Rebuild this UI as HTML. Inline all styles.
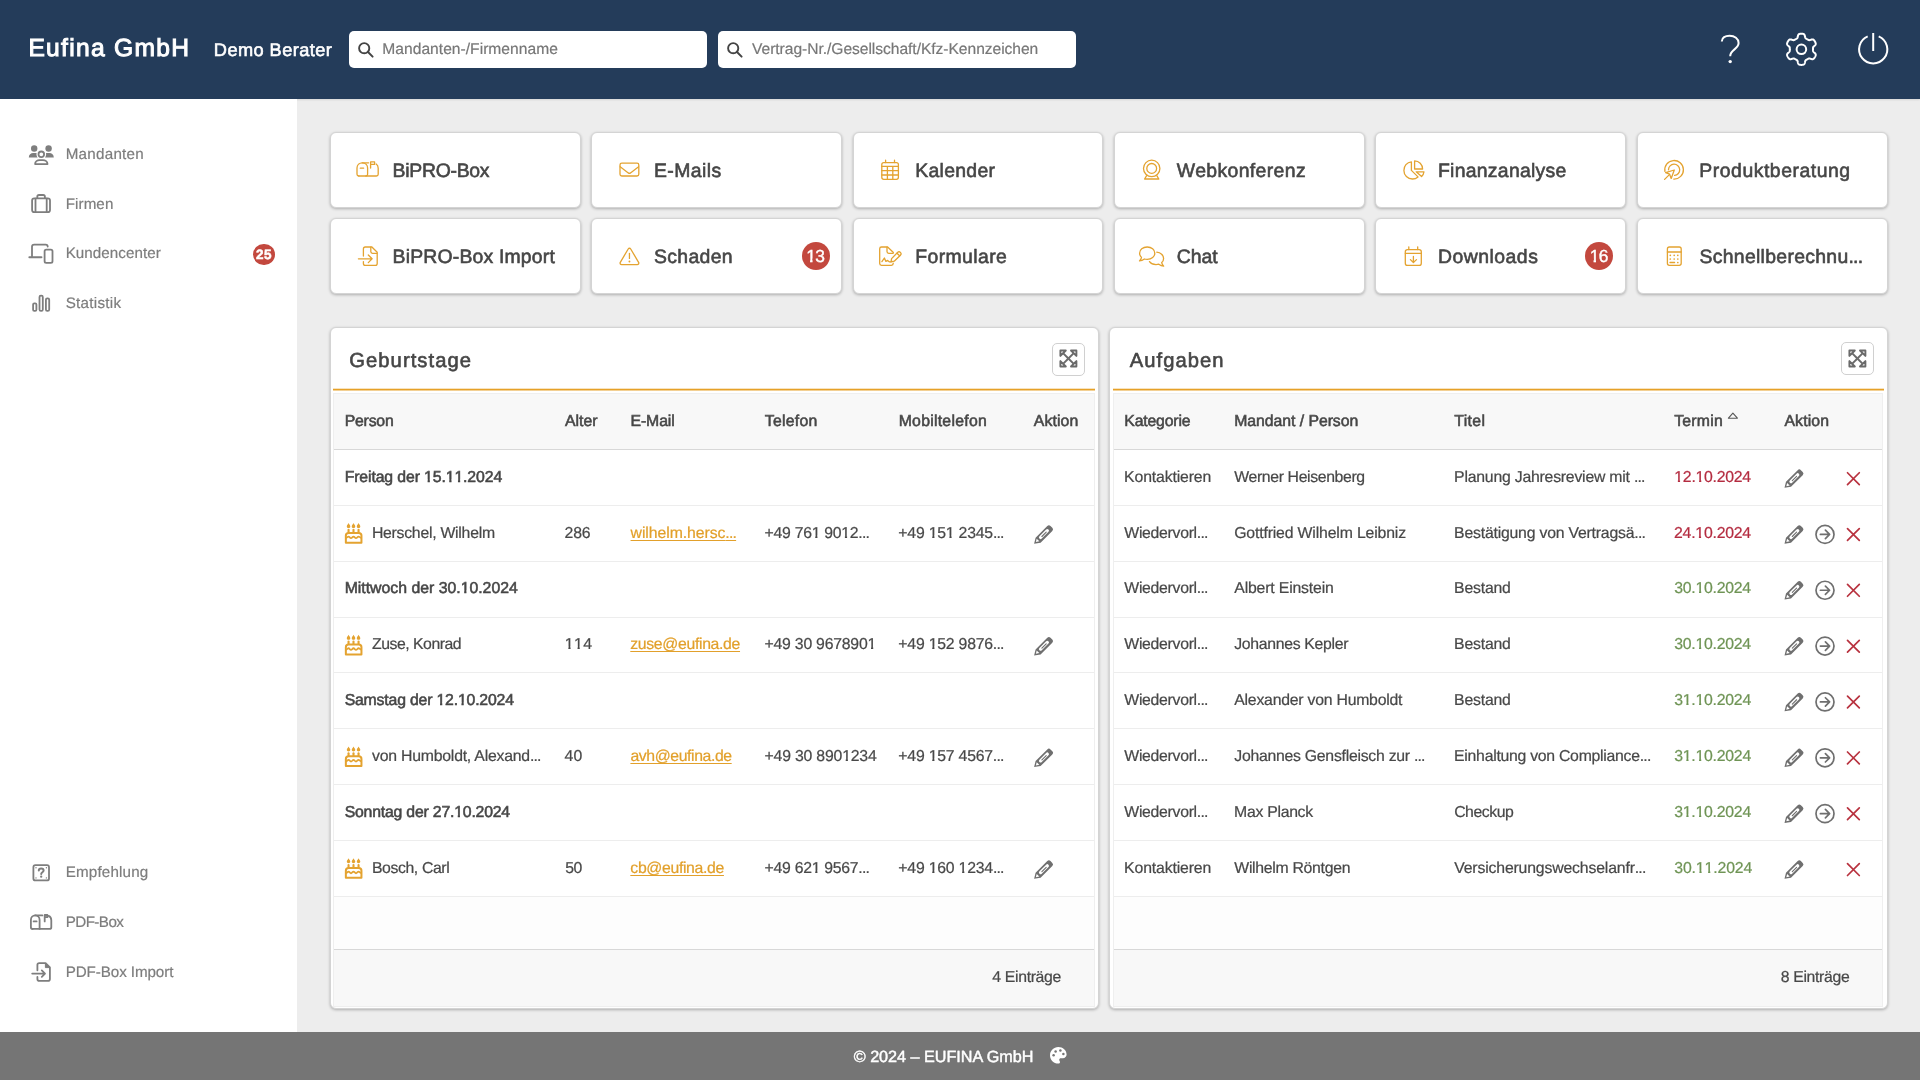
<!DOCTYPE html>
<html lang="de">
<head>
<meta charset="utf-8">
<title>Eufina GmbH</title>
<style>
*{box-sizing:border-box;margin:0;padding:0}
html,body{width:1920px;height:1080px;overflow:hidden}
body{font-family:"Liberation Sans",sans-serif;text-rendering:geometricPrecision;background:#ededed;color:#444;position:relative;font-size:15px}
svg{display:block;overflow:visible}
.abs{position:absolute}
.t{position:absolute;white-space:nowrap;line-height:1}
#txt{position:absolute;left:0;top:0;width:1920px;height:1080px;will-change:transform}
.med{-webkit-text-stroke:0.55px currentColor}
.med5{-webkit-text-stroke:0.45px currentColor}
.med2{-webkit-text-stroke:0.6px currentColor}
.med4{-webkit-text-stroke:1.0px currentColor}
.med3{-webkit-text-stroke:0.6px currentColor;color:#464646}
#hdr{position:absolute;left:0;top:0;width:1920px;height:99px;background:#243c5a;box-shadow:0 1px 2px rgba(0,0,0,.10)}
.brand{color:#fff}
.search{position:absolute;top:31px;height:37px;width:358px;background:#fff;border-radius:5px}
.ph{color:#777;-webkit-text-stroke:0.2px currentColor}
#side{position:absolute;left:0;top:99px;width:297px;height:933px;background:#fff}
.nav{color:#7d7d7d;-webkit-text-stroke:0.2px currentColor}
#ftr{position:absolute;left:0;top:1032px;width:1920px;height:48px;background:#757575}
.tile{position:absolute;width:250.8px;height:75.7px;background:#fff;border:1px solid #d4d4d4;border-radius:6px;box-shadow:0 1px 3px rgba(0,0,0,.27)}
.badge{position:absolute;background:#c3483e;border-radius:50%}
.panel{position:absolute;top:327px;height:682px;background:#fff;border:1px solid #d4d4d4;border-radius:6px;box-shadow:0 1px 3px rgba(0,0,0,.27)}
.oline{position:absolute;height:3px;background:linear-gradient(to bottom,rgba(230,161,40,.30) 0,rgba(230,161,40,.30) 1px,rgba(230,161,40,1) 1px,rgba(230,161,40,1) 2px,rgba(230,161,40,.5) 2px,rgba(230,161,40,.5) 3px)}
.xbtn{position:absolute;width:32.6px;height:32.6px;border:1px solid #d0d0d0;border-radius:5px;background:#fff}
.tbl{position:absolute;border:1px solid #efefef;background:#fdfdfd}
.row{position:absolute;background:#fff;border-bottom:1px solid #ededed}
.hrow{position:absolute;background:#f8f8f8;border-bottom:1px solid #d8d8d8}
.frow{position:absolute;background:#f8f8f8;border-top:1px solid #d8d8d8}
.c{color:#484848;-webkit-text-stroke:0.22px currentColor}
.h{color:#464646}
.red{color:#b42c40}
.grn{color:#6f9455}
.lnk{color:#e2a02b;text-decoration:underline;text-underline-offset:2px}

.o{display:inline-block;font-style:normal;clip-path:polygon(0 0,100% 0,100% .6em,.365em .6em,.365em 1.3em,.225em 1.3em,.225em .6em,0 .6em)}

</style>
</head>
<body>
<div id="hdr">
<div class="search" style="left:349px"><svg class="abs" style="left:9.3px;top:11.3px" width="15.5" height="15.5" viewBox="0 0 15.5 15.5" ><circle cx="6.2" cy="6.2" r="5.1" fill="none" stroke="#444" stroke-width="1.9"/><path d="M10 10 L14.6 14.6" stroke="#444" stroke-width="2" stroke-linecap="round"/></svg></div>
<div class="search" style="left:717.5px"><svg class="abs" style="left:9.3px;top:11.3px" width="15.5" height="15.5" viewBox="0 0 15.5 15.5" ><circle cx="6.2" cy="6.2" r="5.1" fill="none" stroke="#444" stroke-width="1.9"/><path d="M10 10 L14.6 14.6" stroke="#444" stroke-width="2" stroke-linecap="round"/></svg></div>
<svg class="abs" style="left:1718px;top:32px" width="24" height="34" viewBox="0 0 24 34" ><path d="M3.8 9.6 C3.8 5.6 7.2 3.8 11.6 3.8 C16.6 3.8 20.6 6.6 20.6 11 C20.6 17.2 12.2 17.6 12.2 24.2" fill="none" stroke="#fff" stroke-width="2" stroke-linecap="butt"/><circle cx="12.2" cy="29.6" r="1.7" fill="#fff"/></svg>
<svg class="abs" style="left:1784px;top:31px" width="36" height="37" viewBox="0 0 36 37" ><path d="M29.00 18.30 L29.00 18.10 L29.00 17.89 L29.00 17.69 L28.99 17.49 L28.99 17.29 L29.00 17.08 L29.01 16.87 L29.04 16.66 L29.09 16.45 L29.18 16.22 L29.31 15.98 L29.52 15.72 L29.80 15.44 L30.15 15.12 L30.54 14.78 L30.92 14.42 L31.24 14.07 L31.49 13.72 L31.64 13.40 L31.72 13.09 L31.74 12.79 L31.72 12.51 L31.67 12.24 L31.59 11.98 L31.50 11.72 L31.40 11.47 L31.29 11.22 L31.17 10.98 L31.04 10.74 L30.91 10.50 L30.77 10.27 L30.63 10.04 L30.47 9.81 L30.31 9.59 L30.15 9.37 L29.97 9.17 L29.78 8.97 L29.57 8.79 L29.34 8.63 L29.08 8.50 L28.77 8.42 L28.41 8.39 L27.99 8.43 L27.52 8.53 L27.02 8.68 L26.53 8.85 L26.08 9.00 L25.69 9.09 L25.36 9.14 L25.09 9.14 L24.85 9.10 L24.64 9.04 L24.44 8.96 L24.26 8.86 L24.08 8.77 L23.90 8.66 L23.72 8.56 L23.55 8.46 L23.38 8.36 L23.20 8.25 L23.02 8.15 L22.85 8.05 L22.67 7.95 L22.50 7.85 L22.32 7.75 L22.14 7.64 L21.97 7.53 L21.80 7.40 L21.64 7.25 L21.49 7.06 L21.35 6.82 L21.23 6.52 L21.12 6.13 L21.02 5.67 L20.92 5.16 L20.80 4.65 L20.66 4.19 L20.48 3.81 L20.27 3.51 L20.05 3.29 L19.80 3.13 L19.55 3.01 L19.29 2.92 L19.02 2.85 L18.76 2.80 L18.49 2.76 L18.22 2.73 L17.94 2.71 L17.67 2.70 L17.40 2.70 L17.13 2.70 L16.86 2.71 L16.58 2.73 L16.31 2.76 L16.04 2.80 L15.78 2.85 L15.51 2.92 L15.25 3.01 L15.00 3.13 L14.75 3.29 L14.53 3.51 L14.32 3.81 L14.14 4.19 L14.00 4.65 L13.88 5.16 L13.78 5.67 L13.68 6.13 L13.57 6.52 L13.45 6.82 L13.31 7.06 L13.16 7.25 L13.00 7.40 L12.83 7.53 L12.66 7.64 L12.48 7.75 L12.30 7.85 L12.13 7.95 L11.95 8.05 L11.78 8.15 L11.60 8.25 L11.42 8.36 L11.25 8.46 L11.08 8.56 L10.90 8.66 L10.72 8.77 L10.54 8.86 L10.36 8.96 L10.16 9.04 L9.95 9.10 L9.71 9.14 L9.44 9.14 L9.11 9.09 L8.72 9.00 L8.27 8.85 L7.78 8.68 L7.28 8.53 L6.81 8.43 L6.39 8.39 L6.03 8.42 L5.72 8.50 L5.46 8.63 L5.23 8.79 L5.02 8.97 L4.83 9.17 L4.65 9.37 L4.49 9.59 L4.33 9.81 L4.17 10.04 L4.03 10.27 L3.89 10.50 L3.76 10.74 L3.63 10.98 L3.51 11.22 L3.40 11.47 L3.30 11.72 L3.21 11.98 L3.13 12.24 L3.08 12.51 L3.06 12.79 L3.08 13.09 L3.16 13.40 L3.31 13.72 L3.56 14.07 L3.88 14.42 L4.26 14.78 L4.65 15.12 L5.00 15.44 L5.28 15.72 L5.49 15.98 L5.62 16.22 L5.71 16.45 L5.76 16.66 L5.79 16.87 L5.80 17.08 L5.81 17.29 L5.81 17.49 L5.80 17.69 L5.80 17.89 L5.80 18.10 L5.80 18.30 L5.80 18.50 L5.80 18.71 L5.80 18.91 L5.81 19.11 L5.81 19.31 L5.80 19.52 L5.79 19.73 L5.76 19.94 L5.71 20.15 L5.62 20.38 L5.49 20.62 L5.28 20.88 L5.00 21.16 L4.65 21.48 L4.26 21.82 L3.88 22.18 L3.56 22.53 L3.31 22.88 L3.16 23.20 L3.08 23.51 L3.06 23.81 L3.08 24.09 L3.13 24.36 L3.21 24.62 L3.30 24.88 L3.40 25.13 L3.51 25.38 L3.63 25.62 L3.76 25.86 L3.89 26.10 L4.03 26.33 L4.17 26.56 L4.33 26.79 L4.49 27.01 L4.65 27.23 L4.83 27.43 L5.02 27.63 L5.23 27.81 L5.46 27.97 L5.72 28.10 L6.03 28.18 L6.39 28.21 L6.81 28.17 L7.28 28.07 L7.78 27.92 L8.27 27.75 L8.72 27.60 L9.11 27.51 L9.44 27.46 L9.71 27.46 L9.95 27.50 L10.16 27.56 L10.36 27.64 L10.54 27.74 L10.72 27.83 L10.90 27.94 L11.08 28.04 L11.25 28.14 L11.42 28.24 L11.60 28.35 L11.78 28.45 L11.95 28.55 L12.13 28.65 L12.30 28.75 L12.48 28.85 L12.66 28.96 L12.83 29.07 L13.00 29.20 L13.16 29.35 L13.31 29.54 L13.45 29.78 L13.57 30.08 L13.68 30.47 L13.78 30.93 L13.88 31.44 L14.00 31.95 L14.14 32.41 L14.32 32.79 L14.53 33.09 L14.75 33.31 L15.00 33.47 L15.25 33.59 L15.51 33.68 L15.78 33.75 L16.04 33.80 L16.31 33.84 L16.58 33.87 L16.86 33.89 L17.13 33.90 L17.40 33.90 L17.67 33.90 L17.94 33.89 L18.22 33.87 L18.49 33.84 L18.76 33.80 L19.02 33.75 L19.29 33.68 L19.55 33.59 L19.80 33.47 L20.05 33.31 L20.27 33.09 L20.48 32.79 L20.66 32.41 L20.80 31.95 L20.92 31.44 L21.02 30.93 L21.12 30.47 L21.23 30.08 L21.35 29.78 L21.49 29.54 L21.64 29.35 L21.80 29.20 L21.97 29.07 L22.14 28.96 L22.32 28.85 L22.50 28.75 L22.67 28.65 L22.85 28.55 L23.02 28.45 L23.20 28.35 L23.38 28.24 L23.55 28.14 L23.72 28.04 L23.90 27.94 L24.08 27.83 L24.26 27.74 L24.44 27.64 L24.64 27.56 L24.85 27.50 L25.09 27.46 L25.36 27.46 L25.69 27.51 L26.08 27.60 L26.53 27.75 L27.02 27.92 L27.52 28.07 L27.99 28.17 L28.41 28.21 L28.77 28.18 L29.08 28.10 L29.34 27.97 L29.57 27.81 L29.78 27.63 L29.97 27.43 L30.15 27.23 L30.31 27.01 L30.47 26.79 L30.63 26.56 L30.77 26.33 L30.91 26.10 L31.04 25.86 L31.17 25.62 L31.29 25.38 L31.40 25.13 L31.50 24.88 L31.59 24.62 L31.67 24.36 L31.72 24.09 L31.74 23.81 L31.72 23.51 L31.64 23.20 L31.49 22.88 L31.24 22.53 L30.92 22.18 L30.54 21.82 L30.15 21.48 L29.80 21.16 L29.52 20.88 L29.31 20.62 L29.18 20.38 L29.09 20.15 L29.04 19.94 L29.01 19.73 L29.00 19.52 L28.99 19.31 L28.99 19.11 L29.00 18.91 L29.00 18.71 L29.00 18.50 L29.00 18.30Z" fill="none" stroke="#fff" stroke-width="2" stroke-linejoin="round"/><circle cx="17.4" cy="18.3" r="4.8" fill="none" stroke="#fff" stroke-width="2"/></svg>
<svg class="abs" style="left:1856px;top:31px" width="36" height="36" viewBox="0 0 36 36" ><path d="M11.69 5.32 A14.1 14.1 0 1 0 22.71 5.32" fill="none" stroke="#fff" stroke-width="2"/><path d="M17.2 2 V20" stroke="#fff" stroke-width="2"/></svg>
</div>
<div id="side"></div>
<svg class="abs" style="left:0;top:0" width="1920" height="1080" viewBox="0 0 1920 1080"><circle cx="34.2" cy="148.5" r="3.2" fill="#7e7e7e"/><circle cx="48.6" cy="148.5" r="3.2" fill="#7e7e7e"/><circle cx="41.3" cy="154.3" r="2.8" fill="none" stroke="#7e7e7e" stroke-width="1.8"/><path d="M28.8 157.6 C28.8 154.6 30.8 153.0 33.2 153.0 L36.6 153.0 C36.2 154.6 36.6 156.2 37.6 157.6 Z" fill="#7e7e7e"/><path d="M53.8 157.6 C53.8 154.6 51.8 153.0 49.4 153.0 L46.0 153.0 C46.4 154.6 46.0 156.2 45.0 157.6 Z" fill="#7e7e7e"/><path d="M35.1 164.1 C35.1 161.6 37.4 160.1 39.6 160.1 L43.0 160.1 C45.2 160.1 47.5 161.6 47.5 164.1 Z" fill="none" stroke="#7e7e7e" stroke-width="1.8" stroke-linejoin="round" stroke-linecap="round"/><rect x="32.1" y="198.3" width="17.9" height="13.8" rx="2.2" fill="none" stroke="#7e7e7e" stroke-width="1.8" stroke-linejoin="round" stroke-linecap="round"/><path d="M37.3 198.0 V196.6 C37.3 195.6 38.0 195.0 39.0 195.0 H43.2 C44.2 195.0 44.9 195.6 44.9 196.6 V198.0" fill="none" stroke="#7e7e7e" stroke-width="1.8" stroke-linejoin="round" stroke-linecap="round"/><path d="M35.5 198.6 V212 M46.7 198.6 V212" fill="none" stroke="#7e7e7e" stroke-width="1.8" stroke-linejoin="round" stroke-linecap="round"/><path d="M32.0 256.4 V246.8 C32.0 245.4 32.9 244.6 34.2 244.6 H45.6 C46.9 244.6 47.7 245.4 47.7 246.6" fill="none" stroke="#7e7e7e" stroke-width="1.8" stroke-linejoin="round" stroke-linecap="round"/><path d="M29.4 257.3 H41.4" fill="none" stroke="#7e7e7e" stroke-width="2.1" stroke-linecap="round"/><rect x="44.6" y="249.6" width="7.9" height="13.3" rx="1.6" fill="none" stroke="#7e7e7e" stroke-width="1.8" stroke-linejoin="round" stroke-linecap="round"/><rect x="33.1" y="303.3" width="3.3" height="7.6" rx="1.2" fill="none" stroke="#7e7e7e" stroke-width="1.8" stroke-linejoin="round" stroke-linecap="round"/><rect x="39.5" y="295.6" width="3.3" height="15.3" rx="1.4" fill="none" stroke="#7e7e7e" stroke-width="1.8" stroke-linejoin="round" stroke-linecap="round"/><rect x="45.9" y="298.4" width="3.3" height="12.5" rx="1.4" fill="none" stroke="#7e7e7e" stroke-width="1.8" stroke-linejoin="round" stroke-linecap="round"/><rect x="33.4" y="865.2" width="15.6" height="15.2" rx="2" fill="none" stroke="#7e7e7e" stroke-width="1.8" stroke-linejoin="round" stroke-linecap="round"/><path d="M38.8 870.6 C38.8 869.2 39.8 868.6 41.2 868.6 C42.6 868.6 43.6 869.3 43.6 870.5 C43.6 872.2 41.2 872.2 41.2 874.0" fill="none" stroke="#7e7e7e" stroke-width="2.0" stroke-linecap="round"/><circle cx="41.2" cy="876.7" r="1.15" fill="#7e7e7e"/><circle cx="36.0" cy="867.8" r="0.7" fill="#7e7e7e"/><circle cx="46.4" cy="867.8" r="0.7" fill="#7e7e7e"/><circle cx="36.0" cy="877.9" r="0.7" fill="#7e7e7e"/><circle cx="46.4" cy="877.9" r="0.7" fill="#7e7e7e"/><path d="M32.6 928.9 C31.6 928.9 30.9 928.2 30.9 927.2 V920.0 C30.9 917.2 32.9 915.4 35.2 915.4 C37.6 915.4 39.6 917.2 39.6 920.0 V928.9" fill="none" stroke="#7e7e7e" stroke-width="1.8" stroke-linejoin="round" stroke-linecap="round"/><path d="M32.6 928.9 H49.6 C50.6 928.9 51.3 928.2 51.3 927.2 V920.2 C51.3 918.2 50.2 916.6 48.6 915.9" fill="none" stroke="#7e7e7e" stroke-width="1.8" stroke-linejoin="round" stroke-linecap="round"/><path d="M35.2 915.4 H42.4" fill="none" stroke="#7e7e7e" stroke-width="1.8" stroke-linejoin="round" stroke-linecap="round"/><path d="M33.6 921.4 H36.6" fill="none" stroke="#7e7e7e" stroke-width="1.8" stroke-linejoin="round" stroke-linecap="round"/><path d="M44.7 921.4 V915.0 H47.4 V917.2 H44.9" fill="none" stroke="#7e7e7e" stroke-width="1.8" stroke-linejoin="round" stroke-linecap="round"/><path d="M37.4 970.3 V964.8 C37.4 963.7 38.2 963.1 39.2 963.1 H45.6 L49.9 967.4 V978.9 C49.9 980.0 49.1 980.8 48.1 980.8 H39.2 C38.2 980.8 37.4 980.0 37.4 978.9 V977.0" fill="none" stroke="#7e7e7e" stroke-width="1.8" stroke-linejoin="round" stroke-linecap="round"/><path d="M45.4 963.4 V967.6 H49.6 Z" fill="#7e7e7e" stroke="#7e7e7e" stroke-width="1" stroke-linejoin="round"/><path d="M32.2 973.6 H44.8 M41.8 970.4 L45.0 973.6 L41.8 976.8" fill="none" stroke="#7e7e7e" stroke-width="1.8" stroke-linejoin="round" stroke-linecap="round"/></svg>
<div class="badge" style="left:252.9px;top:243.5px;width:22px;height:21.6px"></div>
<div class="tile" style="left:330.0px;top:132px"></div>
<div class="tile" style="left:591.4px;top:132px"></div>
<div class="tile" style="left:852.7px;top:132px"></div>
<div class="tile" style="left:1114.1px;top:132px"></div>
<div class="tile" style="left:1375.4px;top:132px"></div>
<div class="tile" style="left:1636.8px;top:132px"></div>
<div class="tile" style="left:330.0px;top:218px"></div>
<div class="tile" style="left:591.4px;top:218px"></div>
<div class="tile" style="left:852.7px;top:218px"></div>
<div class="tile" style="left:1114.1px;top:218px"></div>
<div class="tile" style="left:1375.4px;top:218px"></div>
<div class="tile" style="left:1636.8px;top:218px"></div>
<svg class="abs" style="left:0;top:0" width="1920" height="1080" viewBox="0 0 1920 1080"><path d="M358.8 176.0 C357.7 176.0 357.0 175.3 357.0 174.2 V168.0 C357.0 164.8 359.4 162.8 362.3 162.8 C365.2 162.8 367.6 164.8 367.6 168.0 V174.2 C367.6 175.3 366.9 176.0 365.9 176.0" fill="none" stroke="#e4a330" stroke-width="1.3" stroke-linejoin="round" stroke-linecap="round"/><path d="M358.8 176.0 H376.4 C377.5 176.0 378.2 175.3 378.2 174.2 V168.2 C378.2 166.2 377.4 164.8 376.2 164.0" fill="none" stroke="#e4a330" stroke-width="1.3" stroke-linejoin="round" stroke-linecap="round"/><path d="M362.3 162.8 H368.6" fill="none" stroke="#e4a330" stroke-width="1.3" stroke-linejoin="round" stroke-linecap="round"/><path d="M360.3 168.2 H363.6" fill="none" stroke="#e4a330" stroke-width="1.3" stroke-linejoin="round" stroke-linecap="round"/><path d="M370.6 168.0 V161.9 H374.6 V164.4 H370.8" fill="none" stroke="#e4a330" stroke-width="1.3" stroke-linejoin="round" stroke-linecap="round"/><rect x="620.0" y="163.1" width="18.8" height="12.9" rx="1.8" fill="none" stroke="#e4a330" stroke-width="1.3" stroke-linejoin="round" stroke-linecap="round"/><path d="M620.2 166.8 L628.3 172.9 C629.0 173.4 629.8 173.4 630.5 172.9 L638.6 166.8" fill="none" stroke="#e4a330" stroke-width="1.3" stroke-linejoin="round" stroke-linecap="round"/><rect x="881.8" y="162.6" width="16.6" height="16.7" rx="2" fill="none" stroke="#e4a330" stroke-width="1.3" stroke-linejoin="round" stroke-linecap="round"/><path d="M885.6 160.2 V162.6 M894.5 160.2 V162.6" fill="none" stroke="#e4a330" stroke-width="1.3" stroke-linejoin="round" stroke-linecap="round"/><path d="M881.8 166.3 H898.4 M881.8 170.7 H898.4 M881.8 175.0 H898.4 M887.4 166.3 V179.3 M892.8 166.3 V179.3" fill="none" stroke="#e4a330" stroke-width="1.3" stroke-linejoin="round" stroke-linecap="round"/><circle cx="1151.7" cy="168.4" r="8.2" fill="none" stroke="#e4a330" stroke-width="1.3" stroke-linejoin="round" stroke-linecap="round"/><circle cx="1151.7" cy="168.4" r="4.9" fill="none" stroke="#e4a330" stroke-width="1.3" stroke-linejoin="round" stroke-linecap="round"/><path d="M1146.6 175.6 L1144.6 179.0 H1158.8 L1156.8 175.6" fill="none" stroke="#e4a330" stroke-width="1.3" stroke-linejoin="round" stroke-linecap="round"/><path d="M1411.4 161.9 C1406.8 162.4 1403.9 166.0 1403.9 170.4 C1403.9 175.2 1407.7 179.0 1412.4 179.0 C1414.6 179.0 1416.6 178.2 1418.0 176.9 L1411.4 170.4 Z" fill="none" stroke="#e4a330" stroke-width="1.3" stroke-linejoin="round" stroke-linecap="round"/><path d="M1414.6 160.8 V169.0 H1422.6 C1422.6 164.6 1419.0 160.8 1414.6 160.8 Z" fill="none" stroke="#e4a330" stroke-width="1.3" stroke-linejoin="round" stroke-linecap="round"/><path d="M1416.2 171.8 H1424.0 C1423.8 173.6 1422.8 175.4 1421.6 176.6 Z" fill="none" stroke="#e4a330" stroke-width="1.3" stroke-linejoin="round" stroke-linecap="round"/><path d="M1664.94 171.41 A9.3 9.3 0 1 1 1673.78 179.09" fill="none" stroke="#e4a330" stroke-width="1.3" stroke-linejoin="round" stroke-linecap="round"/><path d="M1668.50 169.80 A5.6 5.6 0 1 1 1674.59 175.38" fill="none" stroke="#e4a330" stroke-width="1.3" stroke-linejoin="round" stroke-linecap="round"/><path d="M1674.3 170.0 L1665.6 172.6 L1669.6 174.2 L1671.2 178.4 Z" fill="none" stroke="#e4a330" stroke-width="1.3" stroke-linejoin="round" stroke-linecap="round"/><path d="M1669.4 174.6 L1664.6 179.4" fill="none" stroke="#e4a330" stroke-width="1.3" stroke-linejoin="round" stroke-linecap="round"/><path d="M363.4 256.0 V248.9 C363.4 247.8 364.2 247.0 365.3 247.0 H371.9 L377.2 252.2 V263.4 C377.2 264.5 376.4 265.3 375.3 265.3 H365.3 C364.2 265.3 363.4 264.5 363.4 263.4 V261.6" fill="none" stroke="#e4a330" stroke-width="1.3" stroke-linejoin="round" stroke-linecap="round"/><path d="M370.8 247.2 V251.6 C370.8 252.6 371.5 253.3 372.5 253.3 H377.0" fill="none" stroke="#e4a330" stroke-width="1.3" stroke-linejoin="round" stroke-linecap="round"/><path d="M358.4 258.8 H371.8 M368.3 255.0 L372.1 258.8 L368.3 262.6" fill="none" stroke="#e4a330" stroke-width="1.3" stroke-linejoin="round" stroke-linecap="round"/><path d="M628.2 249.0 C628.8 248.0 630.1 248.0 630.7 249.0 L638.6 262.3 C639.2 263.4 638.5 264.6 637.3 264.6 H621.6 C620.4 264.6 619.7 263.4 620.3 262.3 Z" fill="none" stroke="#e4a330" stroke-width="1.3" stroke-linejoin="round" stroke-linecap="round"/><path d="M629.45 253.4 V258.4" fill="none" stroke="#e4a330" stroke-width="1.3" stroke-linejoin="round" stroke-linecap="round"/><circle cx="629.45" cy="261.5" r="0.95" fill="#e4a330"/><path d="M893.2 263.2 V263.6 C893.2 264.6 892.4 265.3 891.4 265.3 H881.5 C880.5 265.3 879.7 264.6 879.7 263.6 V248.8 C879.7 247.8 880.5 247.0 881.5 247.0 H887.6 L893.4 252.4" fill="none" stroke="#e4a330" stroke-width="1.3" stroke-linejoin="round" stroke-linecap="round"/><path d="M887.0 247.2 V251.6 C887.0 252.6 887.7 253.3 888.7 253.3 H893.2" fill="none" stroke="#e4a330" stroke-width="1.3" stroke-linejoin="round" stroke-linecap="round"/><path d="M881.9 261.6 L884.4 258.0 L885.9 261.4 L887.6 260.4 L889.2 261.8 H891.0" fill="none" stroke="#e4a330" stroke-width="1.3" stroke-linejoin="round" stroke-linecap="round"/><path d="M891.6 258.6 L897.6 252.4 C898.4 251.6 899.6 251.6 900.4 252.4 C901.2 253.2 901.2 254.4 900.4 255.2 L894.2 261.2 L891.0 261.9 Z" fill="none" stroke="#e4a330" stroke-width="1.3" stroke-linejoin="round" stroke-linecap="round"/><path d="M897.0 253.2 L899.6 255.8" fill="none" stroke="#e4a330" stroke-width="1.3" stroke-linejoin="round" stroke-linecap="round"/><path d="M1147.2 247.0 C1151.6 247.0 1154.8 249.8 1154.8 253.2 C1154.8 256.6 1151.6 259.4 1147.2 259.4 C1146.2 259.4 1145.3 259.3 1144.4 259.0 C1143.2 259.9 1141.4 260.8 1139.5 260.9 C1140.4 260.0 1141.3 258.7 1141.5 257.4 C1140.3 256.3 1139.6 254.8 1139.6 253.2 C1139.6 249.8 1142.8 247.0 1147.2 247.0 Z" fill="none" stroke="#e4a330" stroke-width="1.3" stroke-linejoin="round" stroke-linecap="round"/><path d="M1156.8 252.2 C1160.6 252.5 1163.6 255.2 1163.6 258.4 C1163.6 260.0 1162.9 261.5 1161.7 262.6 C1161.9 263.9 1162.8 265.2 1163.7 266.1 C1161.8 266.0 1160.0 265.1 1158.8 264.2 C1157.9 264.5 1157.0 264.6 1156.0 264.6 C1153.2 264.6 1150.8 263.4 1149.5 261.6" fill="none" stroke="#e4a330" stroke-width="1.3" stroke-linejoin="round" stroke-linecap="round"/><rect x="1405.3" y="249.6" width="16.0" height="15.8" rx="2.2" fill="none" stroke="#e4a330" stroke-width="1.3" stroke-linejoin="round" stroke-linecap="round"/><path d="M1408.8 246.8 V249.6 M1417.7 246.8 V249.6 M1405.3 253.3 H1421.3" fill="none" stroke="#e4a330" stroke-width="1.3" stroke-linejoin="round" stroke-linecap="round"/><path d="M1413.4 256.4 V262.2 M1410.4 259.6 L1413.4 262.5 L1416.5 259.6" fill="none" stroke="#e4a330" stroke-width="1.3" stroke-linejoin="round" stroke-linecap="round"/><rect x="1667.4" y="247.0" width="13.8" height="18.3" rx="2" fill="none" stroke="#e4a330" stroke-width="1.3" stroke-linejoin="round" stroke-linecap="round"/><path d="M1667.4 252.0 H1681.2" fill="none" stroke="#e4a330" stroke-width="1.3" stroke-linejoin="round" stroke-linecap="round"/><circle cx="1670.3" cy="255.3" r="0.85" fill="#e4a330"/><circle cx="1670.3" cy="259.0" r="0.85" fill="#e4a330"/><circle cx="1674.2" cy="255.3" r="0.85" fill="#e4a330"/><circle cx="1674.2" cy="259.0" r="0.85" fill="#e4a330"/><circle cx="1677.8" cy="255.3" r="0.85" fill="#e4a330"/><circle cx="1677.8" cy="259.0" r="0.85" fill="#e4a330"/><path d="M1670.0 262.5 H1674.6" fill="none" stroke="#e4a330" stroke-width="1.3" stroke-linejoin="round" stroke-linecap="round"/><circle cx="1677.8" cy="262.5" r="0.85" fill="#e4a330"/></svg>
<div class="badge" style="left:801.7px;top:242.2px;width:28px;height:28px"></div>
<div class="badge" style="left:1585.2px;top:242.2px;width:28px;height:28px"></div>
<div class="panel" style="left:330px;width:769px"></div>
<div class="panel" style="left:1109.4px;width:778.6px"></div>
<div class="oline" style="left:333px;top:388px;width:762px"></div>
<div class="oline" style="left:1113px;top:388px;width:771px"></div>
<div class="xbtn" style="left:1052px;top:343px"></div>
<svg class="abs" style="left:0;top:0" width="1920" height="400" viewBox="0 0 1920 400"><path d="M1060.40 350.50 L1065.80 350.50 L1060.40 355.90 Z" fill="none" stroke="#6a6a6a" stroke-width="1.9" stroke-linejoin="round"/><path d="M1068.40 358.50 L1062.80 352.90" stroke="#6a6a6a" stroke-width="1.9"/><path d="M1076.40 350.50 L1071.00 350.50 L1076.40 355.90 Z" fill="none" stroke="#6a6a6a" stroke-width="1.9" stroke-linejoin="round"/><path d="M1068.40 358.50 L1074.00 352.90" stroke="#6a6a6a" stroke-width="1.9"/><path d="M1060.40 366.50 L1065.80 366.50 L1060.40 361.10 Z" fill="none" stroke="#6a6a6a" stroke-width="1.9" stroke-linejoin="round"/><path d="M1068.40 358.50 L1062.80 364.10" stroke="#6a6a6a" stroke-width="1.9"/><path d="M1076.40 366.50 L1071.00 366.50 L1076.40 361.10 Z" fill="none" stroke="#6a6a6a" stroke-width="1.9" stroke-linejoin="round"/><path d="M1068.40 358.50 L1074.00 364.10" stroke="#6a6a6a" stroke-width="1.9"/></svg>
<div class="xbtn" style="left:1841px;top:342.3px"></div>
<svg class="abs" style="left:0;top:0" width="1920" height="400" viewBox="0 0 1920 400"><path d="M1849.40 350.50 L1854.80 350.50 L1849.40 355.90 Z" fill="none" stroke="#6a6a6a" stroke-width="1.9" stroke-linejoin="round"/><path d="M1857.40 358.50 L1851.80 352.90" stroke="#6a6a6a" stroke-width="1.9"/><path d="M1865.40 350.50 L1860.00 350.50 L1865.40 355.90 Z" fill="none" stroke="#6a6a6a" stroke-width="1.9" stroke-linejoin="round"/><path d="M1857.40 358.50 L1863.00 352.90" stroke="#6a6a6a" stroke-width="1.9"/><path d="M1849.40 366.50 L1854.80 366.50 L1849.40 361.10 Z" fill="none" stroke="#6a6a6a" stroke-width="1.9" stroke-linejoin="round"/><path d="M1857.40 358.50 L1851.80 364.10" stroke="#6a6a6a" stroke-width="1.9"/><path d="M1865.40 366.50 L1860.00 366.50 L1865.40 361.10 Z" fill="none" stroke="#6a6a6a" stroke-width="1.9" stroke-linejoin="round"/><path d="M1857.40 358.50 L1863.00 364.10" stroke="#6a6a6a" stroke-width="1.9"/></svg>
<div class="tbl" style="left:333.3px;top:392.8px;width:761.4px;height:614px"></div>
<div class="tbl" style="left:1113.4px;top:392.8px;width:769.2px;height:614px"></div>
<div class="hrow" style="left:334.3px;top:394px;width:759.4px;height:56px"></div>
<div class="row" style="left:334.3px;top:450.00px;width:759.4px;height:55.85px"></div>
<div class="row" style="left:334.3px;top:505.85px;width:759.4px;height:55.85px"></div>
<div class="row" style="left:334.3px;top:561.70px;width:759.4px;height:55.85px"></div>
<div class="row" style="left:334.3px;top:617.55px;width:759.4px;height:55.85px"></div>
<div class="row" style="left:334.3px;top:673.40px;width:759.4px;height:55.85px"></div>
<div class="row" style="left:334.3px;top:729.25px;width:759.4px;height:55.85px"></div>
<div class="row" style="left:334.3px;top:785.10px;width:759.4px;height:55.85px"></div>
<div class="row" style="left:334.3px;top:840.95px;width:759.4px;height:55.85px"></div>
<div class="frow" style="left:334.3px;top:949px;width:759.4px;height:57px"></div>
<div class="hrow" style="left:1114.4px;top:394px;width:767.2px;height:56px"></div>
<div class="row" style="left:1114.4px;top:450.00px;width:767.2px;height:55.85px"></div>
<div class="row" style="left:1114.4px;top:505.85px;width:767.2px;height:55.85px"></div>
<div class="row" style="left:1114.4px;top:561.70px;width:767.2px;height:55.85px"></div>
<div class="row" style="left:1114.4px;top:617.55px;width:767.2px;height:55.85px"></div>
<div class="row" style="left:1114.4px;top:673.40px;width:767.2px;height:55.85px"></div>
<div class="row" style="left:1114.4px;top:729.25px;width:767.2px;height:55.85px"></div>
<div class="row" style="left:1114.4px;top:785.10px;width:767.2px;height:55.85px"></div>
<div class="row" style="left:1114.4px;top:840.95px;width:767.2px;height:55.85px"></div>
<div class="frow" style="left:1114.4px;top:949px;width:767.2px;height:57px"></div>
<svg class="abs" style="left:1727px;top:411px" width="12" height="9" viewBox="0 0 12 9" ><path d="M1.4 7.2 L5.9 2.2 L10.4 7.2 Z" fill="none" stroke="#555" stroke-width="1.1" stroke-linejoin="round"/></svg>
<svg class="abs" style="left:0;top:0" width="1920" height="1080" viewBox="0 0 1920 1080"><g transform="translate(344.70 523.15)"><path d="M3.85 -0.1 C4.45 1.1 5.6 2.2 5.6 3.3 C5.6 4.3 4.75 4.95 3.85 4.95 C2.95 4.95 2.1 4.3 2.1 3.3 C2.1 2.2 3.25 1.1 3.85 -0.1 Z" fill="#e4a330"/><path d="M3.85 6.7 V9.2" fill="none" stroke="#e4a330" stroke-width="2.1" stroke-linecap="round"/><path d="M8.8 -0.1 C9.4 1.1 10.55 2.2 10.55 3.3 C10.55 4.3 9.700000000000001 4.95 8.8 4.95 C7.9 4.95 7.050000000000001 4.3 7.050000000000001 3.3 C7.050000000000001 2.2 8.200000000000001 1.1 8.8 -0.1 Z" fill="#e4a330"/><path d="M8.8 6.7 V9.2" fill="none" stroke="#e4a330" stroke-width="2.1" stroke-linecap="round"/><path d="M13.85 -0.1 C14.45 1.1 15.6 2.2 15.6 3.3 C15.6 4.3 14.75 4.95 13.85 4.95 C12.95 4.95 12.1 4.3 12.1 3.3 C12.1 2.2 13.25 1.1 13.85 -0.1 Z" fill="#e4a330"/><path d="M13.85 6.7 V9.2" fill="none" stroke="#e4a330" stroke-width="2.1" stroke-linecap="round"/><path d="M1.15 19.55 V12.4 C1.15 10.8 2.3 9.75 3.9 9.75 H14.0 C15.6 9.75 16.75 10.8 16.75 12.4 V19.55 Z" fill="none" stroke="#e4a330" stroke-width="2.0" stroke-linejoin="round" stroke-linecap="round"/><path d="M1.15 14.7 C2.4 14.7 2.9 13.4 3.85 13.4 C4.8 13.4 5.3 15.0 6.3 15.0 C7.3 15.0 7.8 13.4 8.8 13.4 C9.8 13.4 10.3 15.0 11.3 15.0 C12.3 15.0 12.9 13.4 13.85 13.4 C14.8 13.4 15.5 14.7 16.75 14.7" fill="none" stroke="#e4a330" stroke-width="1.8"/></g><g transform="translate(344.70 634.85)"><path d="M3.85 -0.1 C4.45 1.1 5.6 2.2 5.6 3.3 C5.6 4.3 4.75 4.95 3.85 4.95 C2.95 4.95 2.1 4.3 2.1 3.3 C2.1 2.2 3.25 1.1 3.85 -0.1 Z" fill="#e4a330"/><path d="M3.85 6.7 V9.2" fill="none" stroke="#e4a330" stroke-width="2.1" stroke-linecap="round"/><path d="M8.8 -0.1 C9.4 1.1 10.55 2.2 10.55 3.3 C10.55 4.3 9.700000000000001 4.95 8.8 4.95 C7.9 4.95 7.050000000000001 4.3 7.050000000000001 3.3 C7.050000000000001 2.2 8.200000000000001 1.1 8.8 -0.1 Z" fill="#e4a330"/><path d="M8.8 6.7 V9.2" fill="none" stroke="#e4a330" stroke-width="2.1" stroke-linecap="round"/><path d="M13.85 -0.1 C14.45 1.1 15.6 2.2 15.6 3.3 C15.6 4.3 14.75 4.95 13.85 4.95 C12.95 4.95 12.1 4.3 12.1 3.3 C12.1 2.2 13.25 1.1 13.85 -0.1 Z" fill="#e4a330"/><path d="M13.85 6.7 V9.2" fill="none" stroke="#e4a330" stroke-width="2.1" stroke-linecap="round"/><path d="M1.15 19.55 V12.4 C1.15 10.8 2.3 9.75 3.9 9.75 H14.0 C15.6 9.75 16.75 10.8 16.75 12.4 V19.55 Z" fill="none" stroke="#e4a330" stroke-width="2.0" stroke-linejoin="round" stroke-linecap="round"/><path d="M1.15 14.7 C2.4 14.7 2.9 13.4 3.85 13.4 C4.8 13.4 5.3 15.0 6.3 15.0 C7.3 15.0 7.8 13.4 8.8 13.4 C9.8 13.4 10.3 15.0 11.3 15.0 C12.3 15.0 12.9 13.4 13.85 13.4 C14.8 13.4 15.5 14.7 16.75 14.7" fill="none" stroke="#e4a330" stroke-width="1.8"/></g><g transform="translate(344.70 746.55)"><path d="M3.85 -0.1 C4.45 1.1 5.6 2.2 5.6 3.3 C5.6 4.3 4.75 4.95 3.85 4.95 C2.95 4.95 2.1 4.3 2.1 3.3 C2.1 2.2 3.25 1.1 3.85 -0.1 Z" fill="#e4a330"/><path d="M3.85 6.7 V9.2" fill="none" stroke="#e4a330" stroke-width="2.1" stroke-linecap="round"/><path d="M8.8 -0.1 C9.4 1.1 10.55 2.2 10.55 3.3 C10.55 4.3 9.700000000000001 4.95 8.8 4.95 C7.9 4.95 7.050000000000001 4.3 7.050000000000001 3.3 C7.050000000000001 2.2 8.200000000000001 1.1 8.8 -0.1 Z" fill="#e4a330"/><path d="M8.8 6.7 V9.2" fill="none" stroke="#e4a330" stroke-width="2.1" stroke-linecap="round"/><path d="M13.85 -0.1 C14.45 1.1 15.6 2.2 15.6 3.3 C15.6 4.3 14.75 4.95 13.85 4.95 C12.95 4.95 12.1 4.3 12.1 3.3 C12.1 2.2 13.25 1.1 13.85 -0.1 Z" fill="#e4a330"/><path d="M13.85 6.7 V9.2" fill="none" stroke="#e4a330" stroke-width="2.1" stroke-linecap="round"/><path d="M1.15 19.55 V12.4 C1.15 10.8 2.3 9.75 3.9 9.75 H14.0 C15.6 9.75 16.75 10.8 16.75 12.4 V19.55 Z" fill="none" stroke="#e4a330" stroke-width="2.0" stroke-linejoin="round" stroke-linecap="round"/><path d="M1.15 14.7 C2.4 14.7 2.9 13.4 3.85 13.4 C4.8 13.4 5.3 15.0 6.3 15.0 C7.3 15.0 7.8 13.4 8.8 13.4 C9.8 13.4 10.3 15.0 11.3 15.0 C12.3 15.0 12.9 13.4 13.85 13.4 C14.8 13.4 15.5 14.7 16.75 14.7" fill="none" stroke="#e4a330" stroke-width="1.8"/></g><g transform="translate(344.70 858.25)"><path d="M3.85 -0.1 C4.45 1.1 5.6 2.2 5.6 3.3 C5.6 4.3 4.75 4.95 3.85 4.95 C2.95 4.95 2.1 4.3 2.1 3.3 C2.1 2.2 3.25 1.1 3.85 -0.1 Z" fill="#e4a330"/><path d="M3.85 6.7 V9.2" fill="none" stroke="#e4a330" stroke-width="2.1" stroke-linecap="round"/><path d="M8.8 -0.1 C9.4 1.1 10.55 2.2 10.55 3.3 C10.55 4.3 9.700000000000001 4.95 8.8 4.95 C7.9 4.95 7.050000000000001 4.3 7.050000000000001 3.3 C7.050000000000001 2.2 8.200000000000001 1.1 8.8 -0.1 Z" fill="#e4a330"/><path d="M8.8 6.7 V9.2" fill="none" stroke="#e4a330" stroke-width="2.1" stroke-linecap="round"/><path d="M13.85 -0.1 C14.45 1.1 15.6 2.2 15.6 3.3 C15.6 4.3 14.75 4.95 13.85 4.95 C12.95 4.95 12.1 4.3 12.1 3.3 C12.1 2.2 13.25 1.1 13.85 -0.1 Z" fill="#e4a330"/><path d="M13.85 6.7 V9.2" fill="none" stroke="#e4a330" stroke-width="2.1" stroke-linecap="round"/><path d="M1.15 19.55 V12.4 C1.15 10.8 2.3 9.75 3.9 9.75 H14.0 C15.6 9.75 16.75 10.8 16.75 12.4 V19.55 Z" fill="none" stroke="#e4a330" stroke-width="2.0" stroke-linejoin="round" stroke-linecap="round"/><path d="M1.15 14.7 C2.4 14.7 2.9 13.4 3.85 13.4 C4.8 13.4 5.3 15.0 6.3 15.0 C7.3 15.0 7.8 13.4 8.8 13.4 C9.8 13.4 10.3 15.0 11.3 15.0 C12.3 15.0 12.9 13.4 13.85 13.4 C14.8 13.4 15.5 14.7 16.75 14.7" fill="none" stroke="#e4a330" stroke-width="1.8"/></g><g transform="translate(1033.70 524.10)"><path d="M0.4 19.6 L1.9 13.6 L13.6 1.9 Q15.2 0.3 16.8 1.9 L18.6 3.7 Q20.2 5.3 18.6 6.9 L6.9 18.6 Z" fill="#6f6f6f"/><path d="M2.2 18.0 L3.0 14.7 L5.6 17.2 Z" fill="#fff"/><path d="M6.9 13.3 L13.6 6.6" stroke="#fff" stroke-width="3.3" stroke-linecap="round"/><path d="M8.2 12.4 L12.5 8.1" stroke="#6f6f6f" stroke-width="1.1" stroke-linecap="round"/></g><g transform="translate(1033.70 635.80)"><path d="M0.4 19.6 L1.9 13.6 L13.6 1.9 Q15.2 0.3 16.8 1.9 L18.6 3.7 Q20.2 5.3 18.6 6.9 L6.9 18.6 Z" fill="#6f6f6f"/><path d="M2.2 18.0 L3.0 14.7 L5.6 17.2 Z" fill="#fff"/><path d="M6.9 13.3 L13.6 6.6" stroke="#fff" stroke-width="3.3" stroke-linecap="round"/><path d="M8.2 12.4 L12.5 8.1" stroke="#6f6f6f" stroke-width="1.1" stroke-linecap="round"/></g><g transform="translate(1033.70 747.50)"><path d="M0.4 19.6 L1.9 13.6 L13.6 1.9 Q15.2 0.3 16.8 1.9 L18.6 3.7 Q20.2 5.3 18.6 6.9 L6.9 18.6 Z" fill="#6f6f6f"/><path d="M2.2 18.0 L3.0 14.7 L5.6 17.2 Z" fill="#fff"/><path d="M6.9 13.3 L13.6 6.6" stroke="#fff" stroke-width="3.3" stroke-linecap="round"/><path d="M8.2 12.4 L12.5 8.1" stroke="#6f6f6f" stroke-width="1.1" stroke-linecap="round"/></g><g transform="translate(1033.70 859.20)"><path d="M0.4 19.6 L1.9 13.6 L13.6 1.9 Q15.2 0.3 16.8 1.9 L18.6 3.7 Q20.2 5.3 18.6 6.9 L6.9 18.6 Z" fill="#6f6f6f"/><path d="M2.2 18.0 L3.0 14.7 L5.6 17.2 Z" fill="#fff"/><path d="M6.9 13.3 L13.6 6.6" stroke="#fff" stroke-width="3.3" stroke-linecap="round"/><path d="M8.2 12.4 L12.5 8.1" stroke="#6f6f6f" stroke-width="1.1" stroke-linecap="round"/></g><g transform="translate(1784.10 468.25)"><path d="M0.4 19.6 L1.9 13.6 L13.6 1.9 Q15.2 0.3 16.8 1.9 L18.6 3.7 Q20.2 5.3 18.6 6.9 L6.9 18.6 Z" fill="#6f6f6f"/><path d="M2.2 18.0 L3.0 14.7 L5.6 17.2 Z" fill="#fff"/><path d="M6.9 13.3 L13.6 6.6" stroke="#fff" stroke-width="3.3" stroke-linecap="round"/><path d="M8.2 12.4 L12.5 8.1" stroke="#6f6f6f" stroke-width="1.1" stroke-linecap="round"/></g><g transform="translate(1784.10 524.10)"><path d="M0.4 19.6 L1.9 13.6 L13.6 1.9 Q15.2 0.3 16.8 1.9 L18.6 3.7 Q20.2 5.3 18.6 6.9 L6.9 18.6 Z" fill="#6f6f6f"/><path d="M2.2 18.0 L3.0 14.7 L5.6 17.2 Z" fill="#fff"/><path d="M6.9 13.3 L13.6 6.6" stroke="#fff" stroke-width="3.3" stroke-linecap="round"/><path d="M8.2 12.4 L12.5 8.1" stroke="#6f6f6f" stroke-width="1.1" stroke-linecap="round"/></g><g transform="translate(1784.10 579.95)"><path d="M0.4 19.6 L1.9 13.6 L13.6 1.9 Q15.2 0.3 16.8 1.9 L18.6 3.7 Q20.2 5.3 18.6 6.9 L6.9 18.6 Z" fill="#6f6f6f"/><path d="M2.2 18.0 L3.0 14.7 L5.6 17.2 Z" fill="#fff"/><path d="M6.9 13.3 L13.6 6.6" stroke="#fff" stroke-width="3.3" stroke-linecap="round"/><path d="M8.2 12.4 L12.5 8.1" stroke="#6f6f6f" stroke-width="1.1" stroke-linecap="round"/></g><g transform="translate(1784.10 635.80)"><path d="M0.4 19.6 L1.9 13.6 L13.6 1.9 Q15.2 0.3 16.8 1.9 L18.6 3.7 Q20.2 5.3 18.6 6.9 L6.9 18.6 Z" fill="#6f6f6f"/><path d="M2.2 18.0 L3.0 14.7 L5.6 17.2 Z" fill="#fff"/><path d="M6.9 13.3 L13.6 6.6" stroke="#fff" stroke-width="3.3" stroke-linecap="round"/><path d="M8.2 12.4 L12.5 8.1" stroke="#6f6f6f" stroke-width="1.1" stroke-linecap="round"/></g><g transform="translate(1784.10 691.65)"><path d="M0.4 19.6 L1.9 13.6 L13.6 1.9 Q15.2 0.3 16.8 1.9 L18.6 3.7 Q20.2 5.3 18.6 6.9 L6.9 18.6 Z" fill="#6f6f6f"/><path d="M2.2 18.0 L3.0 14.7 L5.6 17.2 Z" fill="#fff"/><path d="M6.9 13.3 L13.6 6.6" stroke="#fff" stroke-width="3.3" stroke-linecap="round"/><path d="M8.2 12.4 L12.5 8.1" stroke="#6f6f6f" stroke-width="1.1" stroke-linecap="round"/></g><g transform="translate(1784.10 747.50)"><path d="M0.4 19.6 L1.9 13.6 L13.6 1.9 Q15.2 0.3 16.8 1.9 L18.6 3.7 Q20.2 5.3 18.6 6.9 L6.9 18.6 Z" fill="#6f6f6f"/><path d="M2.2 18.0 L3.0 14.7 L5.6 17.2 Z" fill="#fff"/><path d="M6.9 13.3 L13.6 6.6" stroke="#fff" stroke-width="3.3" stroke-linecap="round"/><path d="M8.2 12.4 L12.5 8.1" stroke="#6f6f6f" stroke-width="1.1" stroke-linecap="round"/></g><g transform="translate(1784.10 803.35)"><path d="M0.4 19.6 L1.9 13.6 L13.6 1.9 Q15.2 0.3 16.8 1.9 L18.6 3.7 Q20.2 5.3 18.6 6.9 L6.9 18.6 Z" fill="#6f6f6f"/><path d="M2.2 18.0 L3.0 14.7 L5.6 17.2 Z" fill="#fff"/><path d="M6.9 13.3 L13.6 6.6" stroke="#fff" stroke-width="3.3" stroke-linecap="round"/><path d="M8.2 12.4 L12.5 8.1" stroke="#6f6f6f" stroke-width="1.1" stroke-linecap="round"/></g><g transform="translate(1784.10 859.20)"><path d="M0.4 19.6 L1.9 13.6 L13.6 1.9 Q15.2 0.3 16.8 1.9 L18.6 3.7 Q20.2 5.3 18.6 6.9 L6.9 18.6 Z" fill="#6f6f6f"/><path d="M2.2 18.0 L3.0 14.7 L5.6 17.2 Z" fill="#fff"/><path d="M6.9 13.3 L13.6 6.6" stroke="#fff" stroke-width="3.3" stroke-linecap="round"/><path d="M8.2 12.4 L12.5 8.1" stroke="#6f6f6f" stroke-width="1.1" stroke-linecap="round"/></g><circle cx="1825.0" cy="534.4" r="9.0" fill="none" stroke="#6f6f6f" stroke-width="1.7"/><path d="M1820.4 534.4 H1829.4 M1825.4 530.1999999999999 L1829.6 534.4 L1825.4 538.6" fill="none" stroke="#6f6f6f" stroke-width="1.7" stroke-linecap="round" stroke-linejoin="round"/><circle cx="1825.0" cy="590.25" r="9.0" fill="none" stroke="#6f6f6f" stroke-width="1.7"/><path d="M1820.4 590.25 H1829.4 M1825.4 586.05 L1829.6 590.25 L1825.4 594.45" fill="none" stroke="#6f6f6f" stroke-width="1.7" stroke-linecap="round" stroke-linejoin="round"/><circle cx="1825.0" cy="646.1" r="9.0" fill="none" stroke="#6f6f6f" stroke-width="1.7"/><path d="M1820.4 646.1 H1829.4 M1825.4 641.9 L1829.6 646.1 L1825.4 650.3000000000001" fill="none" stroke="#6f6f6f" stroke-width="1.7" stroke-linecap="round" stroke-linejoin="round"/><circle cx="1825.0" cy="701.95" r="9.0" fill="none" stroke="#6f6f6f" stroke-width="1.7"/><path d="M1820.4 701.95 H1829.4 M1825.4 697.75 L1829.6 701.95 L1825.4 706.1500000000001" fill="none" stroke="#6f6f6f" stroke-width="1.7" stroke-linecap="round" stroke-linejoin="round"/><circle cx="1825.0" cy="757.8000000000001" r="9.0" fill="none" stroke="#6f6f6f" stroke-width="1.7"/><path d="M1820.4 757.8000000000001 H1829.4 M1825.4 753.6 L1829.6 757.8000000000001 L1825.4 762.0000000000001" fill="none" stroke="#6f6f6f" stroke-width="1.7" stroke-linecap="round" stroke-linejoin="round"/><circle cx="1825.0" cy="813.65" r="9.0" fill="none" stroke="#6f6f6f" stroke-width="1.7"/><path d="M1820.4 813.65 H1829.4 M1825.4 809.4499999999999 L1829.6 813.65 L1825.4 817.85" fill="none" stroke="#6f6f6f" stroke-width="1.7" stroke-linecap="round" stroke-linejoin="round"/><path d="M1847.5 472.75 L1859.3000000000002 484.54999999999995 M1859.3000000000002 472.75 L1847.5 484.54999999999995" stroke="#b8323f" stroke-width="1.7" stroke-linecap="round"/><path d="M1847.5 528.6 L1859.3000000000002 540.4 M1859.3000000000002 528.6 L1847.5 540.4" stroke="#b8323f" stroke-width="1.7" stroke-linecap="round"/><path d="M1847.5 584.45 L1859.3000000000002 596.25 M1859.3000000000002 584.45 L1847.5 596.25" stroke="#b8323f" stroke-width="1.7" stroke-linecap="round"/><path d="M1847.5 640.3000000000001 L1859.3000000000002 652.1 M1859.3000000000002 640.3000000000001 L1847.5 652.1" stroke="#b8323f" stroke-width="1.7" stroke-linecap="round"/><path d="M1847.5 696.1500000000001 L1859.3000000000002 707.95 M1859.3000000000002 696.1500000000001 L1847.5 707.95" stroke="#b8323f" stroke-width="1.7" stroke-linecap="round"/><path d="M1847.5 752.0000000000001 L1859.3000000000002 763.8000000000001 M1859.3000000000002 752.0000000000001 L1847.5 763.8000000000001" stroke="#b8323f" stroke-width="1.7" stroke-linecap="round"/><path d="M1847.5 807.85 L1859.3000000000002 819.65 M1859.3000000000002 807.85 L1847.5 819.65" stroke="#b8323f" stroke-width="1.7" stroke-linecap="round"/><path d="M1847.5 863.7 L1859.3000000000002 875.5 M1859.3000000000002 863.7 L1847.5 875.5" stroke="#b8323f" stroke-width="1.7" stroke-linecap="round"/></svg>
<div id="ftr"></div>
<svg class="abs" style="left:1049.6px;top:1047.1px" width="17" height="17" viewBox="0 0 17 17"><path d="M8.3 0 C3.7 0 0 3.7 0 8.3 C0 12.9 3.7 16.6 8.3 16.6 C9.3 16.6 10.0 15.9 10.0 15.0 C10.0 14.6 9.8 14.2 9.6 13.9 C9.3 13.6 9.2 13.2 9.2 12.8 C9.2 11.9 9.9 11.2 10.8 11.2 H12.9 C15.0 11.2 16.6 9.5 16.6 7.5 C16.6 3.3 12.9 0 8.3 0 Z" fill="#fff"/><circle cx="3.6" cy="8.3" r="1.25" fill="#757575"/><circle cx="5.6" cy="4.4" r="1.25" fill="#757575"/><circle cx="10.4" cy="3.6" r="1.25" fill="#757575"/><circle cx="13.4" cy="6.9" r="1.25" fill="#757575"/></svg>
<div id="txt">
<span class="t brand med4" style="left:28.38px;top:37px;font-size:24.6px;letter-spacing:1.306px;">Eufina GmbH</span>
<span class="t brand med2" style="left:213.81px;top:41px;font-size:18.2px;letter-spacing:0.446px;">Demo Berater</span>
<span class="t ph" style="left:382.32px;top:42px;font-size:15.6px;letter-spacing:0.021px;">Mandanten-/Firmenname</span>
<span class="t ph" style="left:752.03px;top:42px;font-size:15.6px;letter-spacing:-0.038px;">Vertrag-Nr./Gesellschaft/Kfz-Kennzeichen</span>
<span class="t nav" style="left:65.68px;top:147px;font-size:15.2px;letter-spacing:0.256px;">Mandanten</span>
<span class="t nav" style="left:65.68px;top:197px;font-size:15.2px;letter-spacing:0.082px;">Firmen</span>
<span class="t nav" style="left:65.68px;top:246px;font-size:15.2px;letter-spacing:0.056px;">Kundencenter</span>
<span class="t nav" style="left:65.68px;top:296px;font-size:15.2px;letter-spacing:0.279px;">Statistik</span>
<span class="t nav" style="left:65.68px;top:865px;font-size:15.2px;letter-spacing:0.164px;">Empfehlung</span>
<span class="t nav" style="left:65.68px;top:915px;font-size:15.2px;letter-spacing:-0.562px;">PDF-Box</span>
<span class="t nav" style="left:65.68px;top:965px;font-size:15.2px;letter-spacing:-0.087px;">PDF-Box Import</span>
<span class="t " style="left:256.03px;top:248px;font-size:13.5px;letter-spacing:0.528px;color:#fff;font-weight:bold;-webkit-text-stroke:0.5px #fff;">25</span>
<span class="t med3" style="left:392.61px;top:162px;font-size:19.4px;letter-spacing:-0.272px;">BiPRO-Box</span>
<span class="t med3" style="left:653.96px;top:162px;font-size:19.4px;letter-spacing:0.429px;">E-Mails</span>
<span class="t med3" style="left:915.31px;top:162px;font-size:19.4px;letter-spacing:0.294px;">Kalender</span>
<span class="t med3" style="left:1176.86px;top:162px;font-size:19.4px;letter-spacing:0.370px;">Webkonferenz</span>
<span class="t med3" style="left:1438.01px;top:162px;font-size:19.4px;letter-spacing:0.271px;">Finanzanalyse</span>
<span class="t med3" style="left:1699.36px;top:162px;font-size:19.4px;letter-spacing:0.525px;">Produktberatung</span>
<span class="t med3" style="left:392.61px;top:248px;font-size:19.4px;letter-spacing:0.179px;">BiPRO-Box Import</span>
<span class="t med3" style="left:654.07px;top:248px;font-size:19.4px;letter-spacing:0.334px;">Schaden</span>
<span class="t med3" style="left:915.31px;top:248px;font-size:19.4px;letter-spacing:0.388px;">Formulare</span>
<span class="t med3" style="left:1176.66px;top:248px;font-size:19.4px;letter-spacing:0.033px;">Chat</span>
<span class="t med3" style="left:1438.01px;top:248px;font-size:19.4px;letter-spacing:0.489px;">Downloads</span>
<span class="t med3" style="left:1699.47px;top:248px;font-size:19.4px;letter-spacing:0.307px;">Schnellberechnu<span style="letter-spacing:-0.8px">...</span></span>
<span class="t " style="left:806.17px;top:248px;font-size:17.4px;letter-spacing:-0.664px;color:#fff;-webkit-text-stroke:0.4px #fff;"><i class="o">1</i>3</span>
<span class="t " style="left:1589.67px;top:248px;font-size:17.4px;letter-spacing:-0.664px;color:#fff;-webkit-text-stroke:0.4px #fff;"><i class="o">1</i>6</span>
<span class="t med3" style="left:349.28px;top:351px;font-size:20.2px;letter-spacing:1.064px;">Geburtstage</span>
<span class="t med3" style="left:1129.76px;top:351px;font-size:20.2px;letter-spacing:1.037px;">Aufgaben</span>
<span class="t h med" style="left:344.66px;top:414px;font-size:15.8px;letter-spacing:-0.194px;">Person</span>
<span class="t h med" style="left:564.93px;top:414px;font-size:15.8px;letter-spacing:0.017px;">Alter</span>
<span class="t h med" style="left:630.46px;top:414px;font-size:15.8px;letter-spacing:-0.089px;">E-Mail</span>
<span class="t h med" style="left:764.83px;top:414px;font-size:15.8px;letter-spacing:0.245px;">Telefon</span>
<span class="t h med" style="left:898.66px;top:414px;font-size:15.8px;letter-spacing:0.263px;">Mobiltelefon</span>
<span class="t h med" style="left:1033.73px;top:414px;font-size:15.8px;letter-spacing:0.121px;">Aktion</span>
<span class="t h med" style="left:1124.26px;top:414px;font-size:15.8px;letter-spacing:-0.158px;">Kategorie</span>
<span class="t h med" style="left:1234.26px;top:414px;font-size:15.8px;letter-spacing:-0.048px;">Mandant / Person</span>
<span class="t h med" style="left:1454.23px;top:414px;font-size:15.8px;letter-spacing:0.372px;">Titel</span>
<span class="t h med" style="left:1674.23px;top:414px;font-size:15.8px;letter-spacing:0.222px;">Termin</span>
<span class="t h med" style="left:1784.43px;top:414px;font-size:15.8px;letter-spacing:0.141px;">Aktion</span>
<span class="t h med" style="left:344.66px;top:470px;font-size:15.8px;letter-spacing:-0.113px;">Freitag der <i class="o">1</i>5.<i class="o">1</i><i class="o">1</i>.2024</span>
<span class="t h med" style="left:344.66px;top:581px;font-size:15.8px;letter-spacing:0.005px;">Mittwoch der 30.<i class="o">1</i>0.2024</span>
<span class="t h med" style="left:344.66px;top:693px;font-size:15.8px;letter-spacing:-0.177px;">Samstag der <i class="o">1</i>2.<i class="o">1</i>0.2024</span>
<span class="t h med" style="left:344.66px;top:805px;font-size:15.8px;letter-spacing:-0.192px;">Sonntag der 27.<i class="o">1</i>0.2024</span>
<span class="t c" style="left:371.89px;top:526px;font-size:15.8px;letter-spacing:-0.254px;">Herschel, Wilhelm</span>
<span class="t c" style="left:564.52px;top:526px;font-size:15.8px;letter-spacing:-0.147px;">286</span>
<span class="t c lnk" style="left:630.57px;top:526px;font-size:15.8px;letter-spacing:-0.070px;">wilhelm.hersc<span style="letter-spacing:-0.8px">...</span></span>
<span class="t c" style="left:764.56px;top:526px;font-size:15.8px;letter-spacing:-0.274px;">+49 76<i class="o">1</i> 90<i class="o">1</i>2<span style="letter-spacing:-0.8px">...</span></span>
<span class="t c" style="left:898.36px;top:526px;font-size:15.8px;letter-spacing:-0.216px;">+49 <i class="o">1</i>5<i class="o">1</i> 2345<span style="letter-spacing:-0.8px">...</span></span>
<span class="t c" style="left:372.03px;top:637px;font-size:15.8px;letter-spacing:-0.480px;">Zuse, Konrad</span>
<span class="t c" style="left:564.81px;top:637px;font-size:15.8px;letter-spacing:0.377px;"><i class="o">1</i><i class="o">1</i>4</span>
<span class="t c lnk" style="left:630.29px;top:637px;font-size:15.8px;letter-spacing:-0.333px;">zuse@eufina.de</span>
<span class="t c" style="left:764.56px;top:637px;font-size:15.8px;letter-spacing:-0.228px;">+49 30 967890<i class="o">1</i></span>
<span class="t c" style="left:898.36px;top:637px;font-size:15.8px;letter-spacing:-0.216px;">+49 <i class="o">1</i>52 9876<span style="letter-spacing:-0.8px">...</span></span>
<span class="t c" style="left:372.01px;top:749px;font-size:15.8px;letter-spacing:-0.216px;">von Humboldt, Alexand<span style="letter-spacing:-0.8px">...</span></span>
<span class="t c" style="left:564.56px;top:749px;font-size:15.8px;letter-spacing:0.073px;">40</span>
<span class="t c lnk" style="left:630.42px;top:749px;font-size:15.8px;letter-spacing:-0.404px;">avh@eufina.de</span>
<span class="t c" style="left:764.56px;top:749px;font-size:15.8px;letter-spacing:-0.190px;">+49 30 890<i class="o">1</i>234</span>
<span class="t c" style="left:898.36px;top:749px;font-size:15.8px;letter-spacing:-0.216px;">+49 <i class="o">1</i>57 4567<span style="letter-spacing:-0.8px">...</span></span>
<span class="t c" style="left:371.89px;top:861px;font-size:15.8px;letter-spacing:-0.381px;">Bosch, Carl</span>
<span class="t c" style="left:565.15px;top:861px;font-size:15.8px;letter-spacing:-0.515px;">50</span>
<span class="t c lnk" style="left:630.34px;top:861px;font-size:15.8px;letter-spacing:-0.344px;">cb@eufina.de</span>
<span class="t c" style="left:764.56px;top:861px;font-size:15.8px;letter-spacing:-0.274px;">+49 62<i class="o">1</i> 9567<span style="letter-spacing:-0.8px">...</span></span>
<span class="t c" style="left:898.36px;top:861px;font-size:15.8px;letter-spacing:-0.216px;">+49 <i class="o">1</i>60 <i class="o">1</i>234<span style="letter-spacing:-0.8px">...</span></span>
<span class="t c" style="left:1124.09px;top:470px;font-size:15.8px;letter-spacing:-0.136px;">Kontaktieren</span>
<span class="t c" style="left:1234.27px;top:470px;font-size:15.8px;letter-spacing:-0.367px;">Werner Heisenberg</span>
<span class="t c" style="left:1454.09px;top:470px;font-size:15.8px;letter-spacing:-0.217px;">Planung Jahresreview mit <span style="letter-spacing:-0.8px">...</span></span>
<span class="t c red" style="left:1674.31px;top:470px;font-size:15.8px;letter-spacing:-0.248px;"><i class="o">1</i>2.<i class="o">1</i>0.2024</span>
<span class="t c" style="left:1124.27px;top:526px;font-size:15.8px;letter-spacing:-0.292px;">Wiedervorl<span style="letter-spacing:-0.8px">...</span></span>
<span class="t c" style="left:1234.20px;top:526px;font-size:15.8px;letter-spacing:-0.156px;">Gottfried Wilhelm Leibniz</span>
<span class="t c" style="left:1454.09px;top:526px;font-size:15.8px;letter-spacing:-0.203px;">Bestätigung von Vertragsä<span style="letter-spacing:-0.8px">...</span></span>
<span class="t c red" style="left:1674.02px;top:526px;font-size:15.8px;letter-spacing:-0.216px;">24.<i class="o">1</i>0.2024</span>
<span class="t c" style="left:1124.27px;top:581px;font-size:15.8px;letter-spacing:-0.292px;">Wiedervorl<span style="letter-spacing:-0.8px">...</span></span>
<span class="t c" style="left:1234.27px;top:581px;font-size:15.8px;letter-spacing:-0.166px;">Albert Einstein</span>
<span class="t c" style="left:1454.09px;top:581px;font-size:15.8px;letter-spacing:-0.194px;">Bestand</span>
<span class="t c grn" style="left:1674.21px;top:581px;font-size:15.8px;letter-spacing:-0.237px;">30.<i class="o">1</i>0.2024</span>
<span class="t c" style="left:1124.27px;top:637px;font-size:15.8px;letter-spacing:-0.292px;">Wiedervorl<span style="letter-spacing:-0.8px">...</span></span>
<span class="t c" style="left:1234.25px;top:637px;font-size:15.8px;letter-spacing:-0.313px;">Johannes Kepler</span>
<span class="t c" style="left:1454.09px;top:637px;font-size:15.8px;letter-spacing:-0.194px;">Bestand</span>
<span class="t c grn" style="left:1674.21px;top:637px;font-size:15.8px;letter-spacing:-0.237px;">30.<i class="o">1</i>0.2024</span>
<span class="t c" style="left:1124.27px;top:693px;font-size:15.8px;letter-spacing:-0.292px;">Wiedervorl<span style="letter-spacing:-0.8px">...</span></span>
<span class="t c" style="left:1234.27px;top:693px;font-size:15.8px;letter-spacing:-0.228px;">Alexander von Humboldt</span>
<span class="t c" style="left:1454.09px;top:693px;font-size:15.8px;letter-spacing:-0.194px;">Bestand</span>
<span class="t c grn" style="left:1674.21px;top:693px;font-size:15.8px;letter-spacing:-0.237px;">3<i class="o">1</i>.<i class="o">1</i>0.2024</span>
<span class="t c" style="left:1124.27px;top:749px;font-size:15.8px;letter-spacing:-0.292px;">Wiedervorl<span style="letter-spacing:-0.8px">...</span></span>
<span class="t c" style="left:1234.25px;top:749px;font-size:15.8px;letter-spacing:-0.259px;">Johannes Gensfleisch zur <span style="letter-spacing:-0.8px">...</span></span>
<span class="t c" style="left:1454.09px;top:749px;font-size:15.8px;letter-spacing:-0.267px;">Einhaltung von Compliance<span style="letter-spacing:-0.8px">...</span></span>
<span class="t c grn" style="left:1674.21px;top:749px;font-size:15.8px;letter-spacing:-0.237px;">3<i class="o">1</i>.<i class="o">1</i>0.2024</span>
<span class="t c" style="left:1124.27px;top:805px;font-size:15.8px;letter-spacing:-0.292px;">Wiedervorl<span style="letter-spacing:-0.8px">...</span></span>
<span class="t c" style="left:1234.09px;top:805px;font-size:15.8px;letter-spacing:-0.288px;">Max Planck</span>
<span class="t c" style="left:1454.17px;top:805px;font-size:15.8px;letter-spacing:-0.445px;">Checkup</span>
<span class="t c grn" style="left:1674.21px;top:805px;font-size:15.8px;letter-spacing:-0.237px;">3<i class="o">1</i>.<i class="o">1</i>0.2024</span>
<span class="t c" style="left:1124.09px;top:861px;font-size:15.8px;letter-spacing:-0.136px;">Kontaktieren</span>
<span class="t c" style="left:1234.27px;top:861px;font-size:15.8px;letter-spacing:-0.290px;">Wilhelm Röntgen</span>
<span class="t c" style="left:1454.23px;top:861px;font-size:15.8px;letter-spacing:-0.162px;">Versicherungswechselanfr<span style="letter-spacing:-0.8px">...</span></span>
<span class="t c grn" style="left:1674.21px;top:861px;font-size:15.8px;letter-spacing:-0.107px;">30.<i class="o">1</i><i class="o">1</i>.2024</span>
<span class="t c" style="left:992.35px;top:970px;font-size:15.8px;letter-spacing:-0.342px;">4 Einträge</span>
<span class="t c" style="left:1780.67px;top:970px;font-size:15.8px;letter-spacing:-0.323px;">8 Einträge</span>
<span class="t med5" style="left:853.78px;top:1049px;font-size:16.2px;letter-spacing:-0.026px;color:#fff;">© 2024 – EUFINA GmbH</span>
</div>
</body>
</html>
